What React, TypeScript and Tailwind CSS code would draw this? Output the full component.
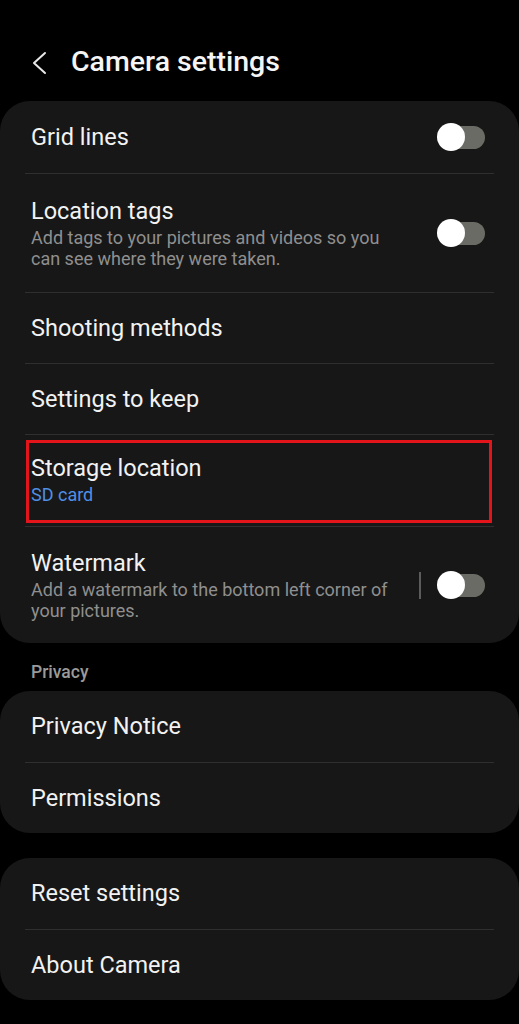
import React from 'react';

const Toggle = () => (
  <div className="relative w-[48px] h-[28px] shrink-0 flex items-center">
    <div className="absolute left-[3px] right-0 h-[23px] rounded-full bg-[#6b6b66]" />
    <div className="absolute left-0 w-[28px] h-[28px] rounded-full bg-white" />
  </div>
);

const Divider = () => <div className="mx-[25px] h-px bg-[#2f2f2f]" />;

type Row = { title: string; sub?: string; blue?: string; toggle?: boolean; sep?: boolean; h: number; boxed?: boolean };

const RowItem = ({ r }: { r: Row }) => (
  <div className="relative flex items-center pl-[31px] pr-[34px]" style={{ height: r.h }}>
    {r.boxed && <div className="absolute left-[26px] right-[27px] top-[5px] bottom-[3px] border-[3px] border-[#e4141b]" />}
    <div className="flex-1 flex flex-col">
      <div className="text-[23.5px] leading-[29px] text-[#f2f2f2]">{r.title}</div>
      {r.sub && <div className="text-[18px] leading-[21px] text-[#8f8f8f] max-w-[362px] mt-[1px]">{r.sub}</div>}
      {r.blue && <div className="text-[18px] leading-[24px] text-[#4f8fe6]">{r.blue}</div>}
    </div>
    {r.sep && <div className="w-[2px] h-[27px] bg-[#5c5c5c] mr-[16px]" />}
    {r.toggle && <Toggle />}
  </div>
);

const Card = ({ rows }: { rows: Row[] }) => (
  <div className="bg-[#171717] rounded-[30px]">
    {rows.map((r, i) => (
      <div key={r.title}>
        {i > 0 && <Divider />}
        <RowItem r={r} />
      </div>
    ))}
  </div>
);

export default function App() {
  const main: Row[] = [
    { title: 'Grid lines', toggle: true, h: 72 },
    { title: 'Location tags', sub: 'Add tags to your pictures and videos so you can see where they were taken.', toggle: true, h: 118 },
    { title: 'Shooting methods', h: 70 },
    { title: 'Settings to keep', h: 70 },
    { title: 'Storage location', blue: 'SD card', h: 91, boxed: true },
    { title: 'Watermark', sub: 'Add a watermark to the bottom left corner of your pictures.', toggle: true, sep: true, h: 116 },
  ];
  const privacy: Row[] = [
    { title: 'Privacy Notice', h: 71 },
    { title: 'Permissions', h: 70 },
  ];
  const other: Row[] = [
    { title: 'Reset settings', h: 71 },
    { title: 'About Camera', h: 70 },
  ];

  return (
    <div className="min-h-[1024px] bg-black" style={{ fontFamily: 'Roboto, "Noto Sans", sans-serif' }}>
      <div className="h-[101px] flex items-center pl-[30px] pt-[23px]">
        <svg width="20" height="24" viewBox="0 0 20 24" className="mt-[1px]">
          <path d="M15 2 L4 12 L15 22" stroke="#e8e8e8" strokeWidth="2" fill="none" strokeLinecap="round" strokeLinejoin="round" />
        </svg>
        <h1 className="ml-[21px] text-[28.5px] font-medium text-[#f5f5f5]">Camera settings</h1>
      </div>
      <Card rows={main} />
      <div className="h-[48px] flex items-center pl-[31px] text-[17.5px] font-medium text-[#9a9a9a] pt-[10px]">Privacy</div>
      <Card rows={privacy} />
      <div className="h-[25px]" />
      <Card rows={other} />
    </div>
  );
}
